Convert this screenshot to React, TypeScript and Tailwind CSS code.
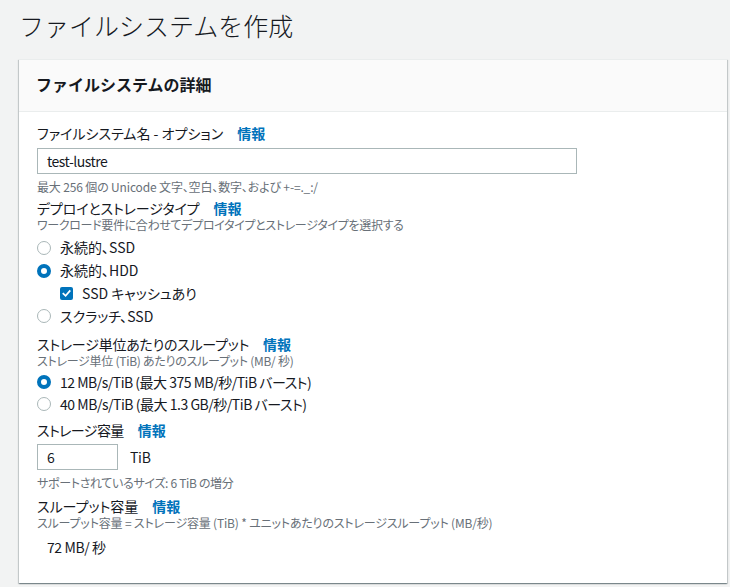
import React from "react";

const FONT = "[font-family:'Noto_Sans_CJK_JP','Noto_Sans',sans-serif]";

function Info() {
  return <span className="ml-[14px] font-bold text-[#0073bb] tracking-normal">情報</span>;
}

function Radio({ checked, label, h = "h-[23px]", tr = "" }: { checked?: boolean; label: string; h?: string; tr?: string }) {
  return (
    <div className={`flex items-center ${h}`}>
      {checked ? (
        <span className="block w-[14px] h-[14px] rounded-full border-[4px] border-[#0073bb] bg-white" />
      ) : (
        <span className="block w-[14px] h-[14px] rounded-full border-[1.5px] border-[#aab7b8] bg-white" />
      )}
      <span className={`ml-[9px] text-[14px] text-[#16191f] ${tr}`}>{label}</span>
    </div>
  );
}

export default function App() {
  return (
    <div className={`w-[730px] h-[587px] bg-[#f2f3f3] overflow-hidden ${FONT} text-[#16191f]`}>
      <div className="pl-[19px] pt-[7px] h-[59px]">
        <h1 className="text-[25px] leading-[36px] font-light text-[#16191f]">ファイルシステムを作成</h1>
      </div>
      <div className="ml-[19px] w-[708px] h-[524px] bg-white shadow-[0_1px_1px_0_rgba(0,28,36,0.3),1px_1px_1px_0_rgba(0,28,36,0.15),-1px_1px_1px_0_rgba(0,28,36,0.15)] border-t border-[#eaeded]">
        <div className="h-[52px] bg-[#fafafa] border-b border-[#eaeded] px-[17px] pb-[4px] flex items-center">
          <h2 className="text-[16px] font-bold leading-[20px]">ファイルシステムの詳細</h2>
        </div>
        <div className="pl-[18px] pt-[13px] [font-feature-settings:'palt']">
          <div className="h-[17px] leading-[17px] text-[14px]">
            ファイルシステム名 - オプション<Info />
          </div>
          <div className="mt-[6px] w-[540px] h-[26px] border border-[#aab7b8] flex items-center pl-[9px] text-[14px] tracking-[-0.5px]">
            test-lustre
          </div>
          <div className="mt-[5px] h-[16px] leading-[16px] text-[12px] text-[#687078] tracking-[-0.15px]">
            最大 256 個の Unicode 文字、空白、数字、および +-=._:/
          </div>

          <div className="mt-[5px] h-[17px] leading-[17px] text-[14px] tracking-[-0.15px]">
            デプロイとストレージタイプ<Info />
          </div>
          <div className="h-[15px] leading-[15px] text-[12px] text-[#687078] tracking-[-0.33px]">
            ワークロード要件に合わせてデプロイタイプとストレージタイプを選択する
          </div>
          <div className="mt-[4px]">
            <Radio label="永続的、SSD" />
            <Radio checked label="永続的、HDD" />
            <div className="flex items-center h-[23px] pl-[23px]">
              <span className="flex items-center justify-center w-[13px] h-[13px] rounded-[2px] bg-[#0073bb]">
                <svg width="9" height="9" viewBox="0 0 10 10" fill="none">
                  <path d="M1.5 5.2 L4 7.6 L8.6 2.2" stroke="white" strokeWidth="1.9" strokeLinecap="square" />
                </svg>
              </span>
              <span className="ml-[9px] text-[14px]">SSD キャッシュあり</span>
            </div>
            <Radio label="スクラッチ、SSD" h="h-[22px]" />
          </div>

          <div className="mt-[9px] h-[17px] leading-[17px] text-[14px] tracking-[-0.25px]">
            ストレージ単位あたりのスループット<Info />
          </div>
          <div className="h-[15px] leading-[15px] text-[12px] text-[#687078] tracking-[-0.27px]">
            ストレージ単位 (TiB) あたりのスループット (MB/ 秒)
          </div>
          <div className="mt-[3px]">
            <Radio checked label="12 MB/s/TiB (最大 375 MB/秒/TiB バースト)" h="h-[22px]" tr="tracking-[-0.5px]" />
            <Radio label="40 MB/s/TiB (最大 1.3 GB/秒/TiB バースト)" h="h-[22px]" tr="tracking-[-0.47px]" />
          </div>

          <div className="mt-[7px] h-[17px] leading-[17px] text-[14px] tracking-[-0.6px]">
            ストレージ容量<Info />
          </div>
          <div className="mt-[5px] flex items-center">
            <div className="w-[81px] h-[26px] border border-[#aab7b8] flex items-center pl-[9px] text-[14px]">6</div>
            <span className="ml-[12px] text-[14px] tracking-[-0.3px]">TiB</span>
          </div>
          <div className="mt-[5px] h-[16px] leading-[16px] text-[12px] text-[#687078] tracking-[-0.33px]">
            サポートされているサイズ: 6 TiB の増分
          </div>

          <div className="mt-[7px] h-[17px] leading-[17px] text-[14px]">
            スループット容量<Info />
          </div>
          <div className="h-[15px] leading-[15px] text-[12px] text-[#687078] tracking-[-0.18px]">
            スループット容量 = ストレージ容量 (TiB) * ユニットあたりのストレージスループット (MB/秒)
          </div>
          <div className="mt-[7px] h-[20px] leading-[20px] pl-[10px] text-[14px] tracking-[-0.4px]">72 MB/ 秒</div>
        </div>
      </div>
    </div>
  );
}
